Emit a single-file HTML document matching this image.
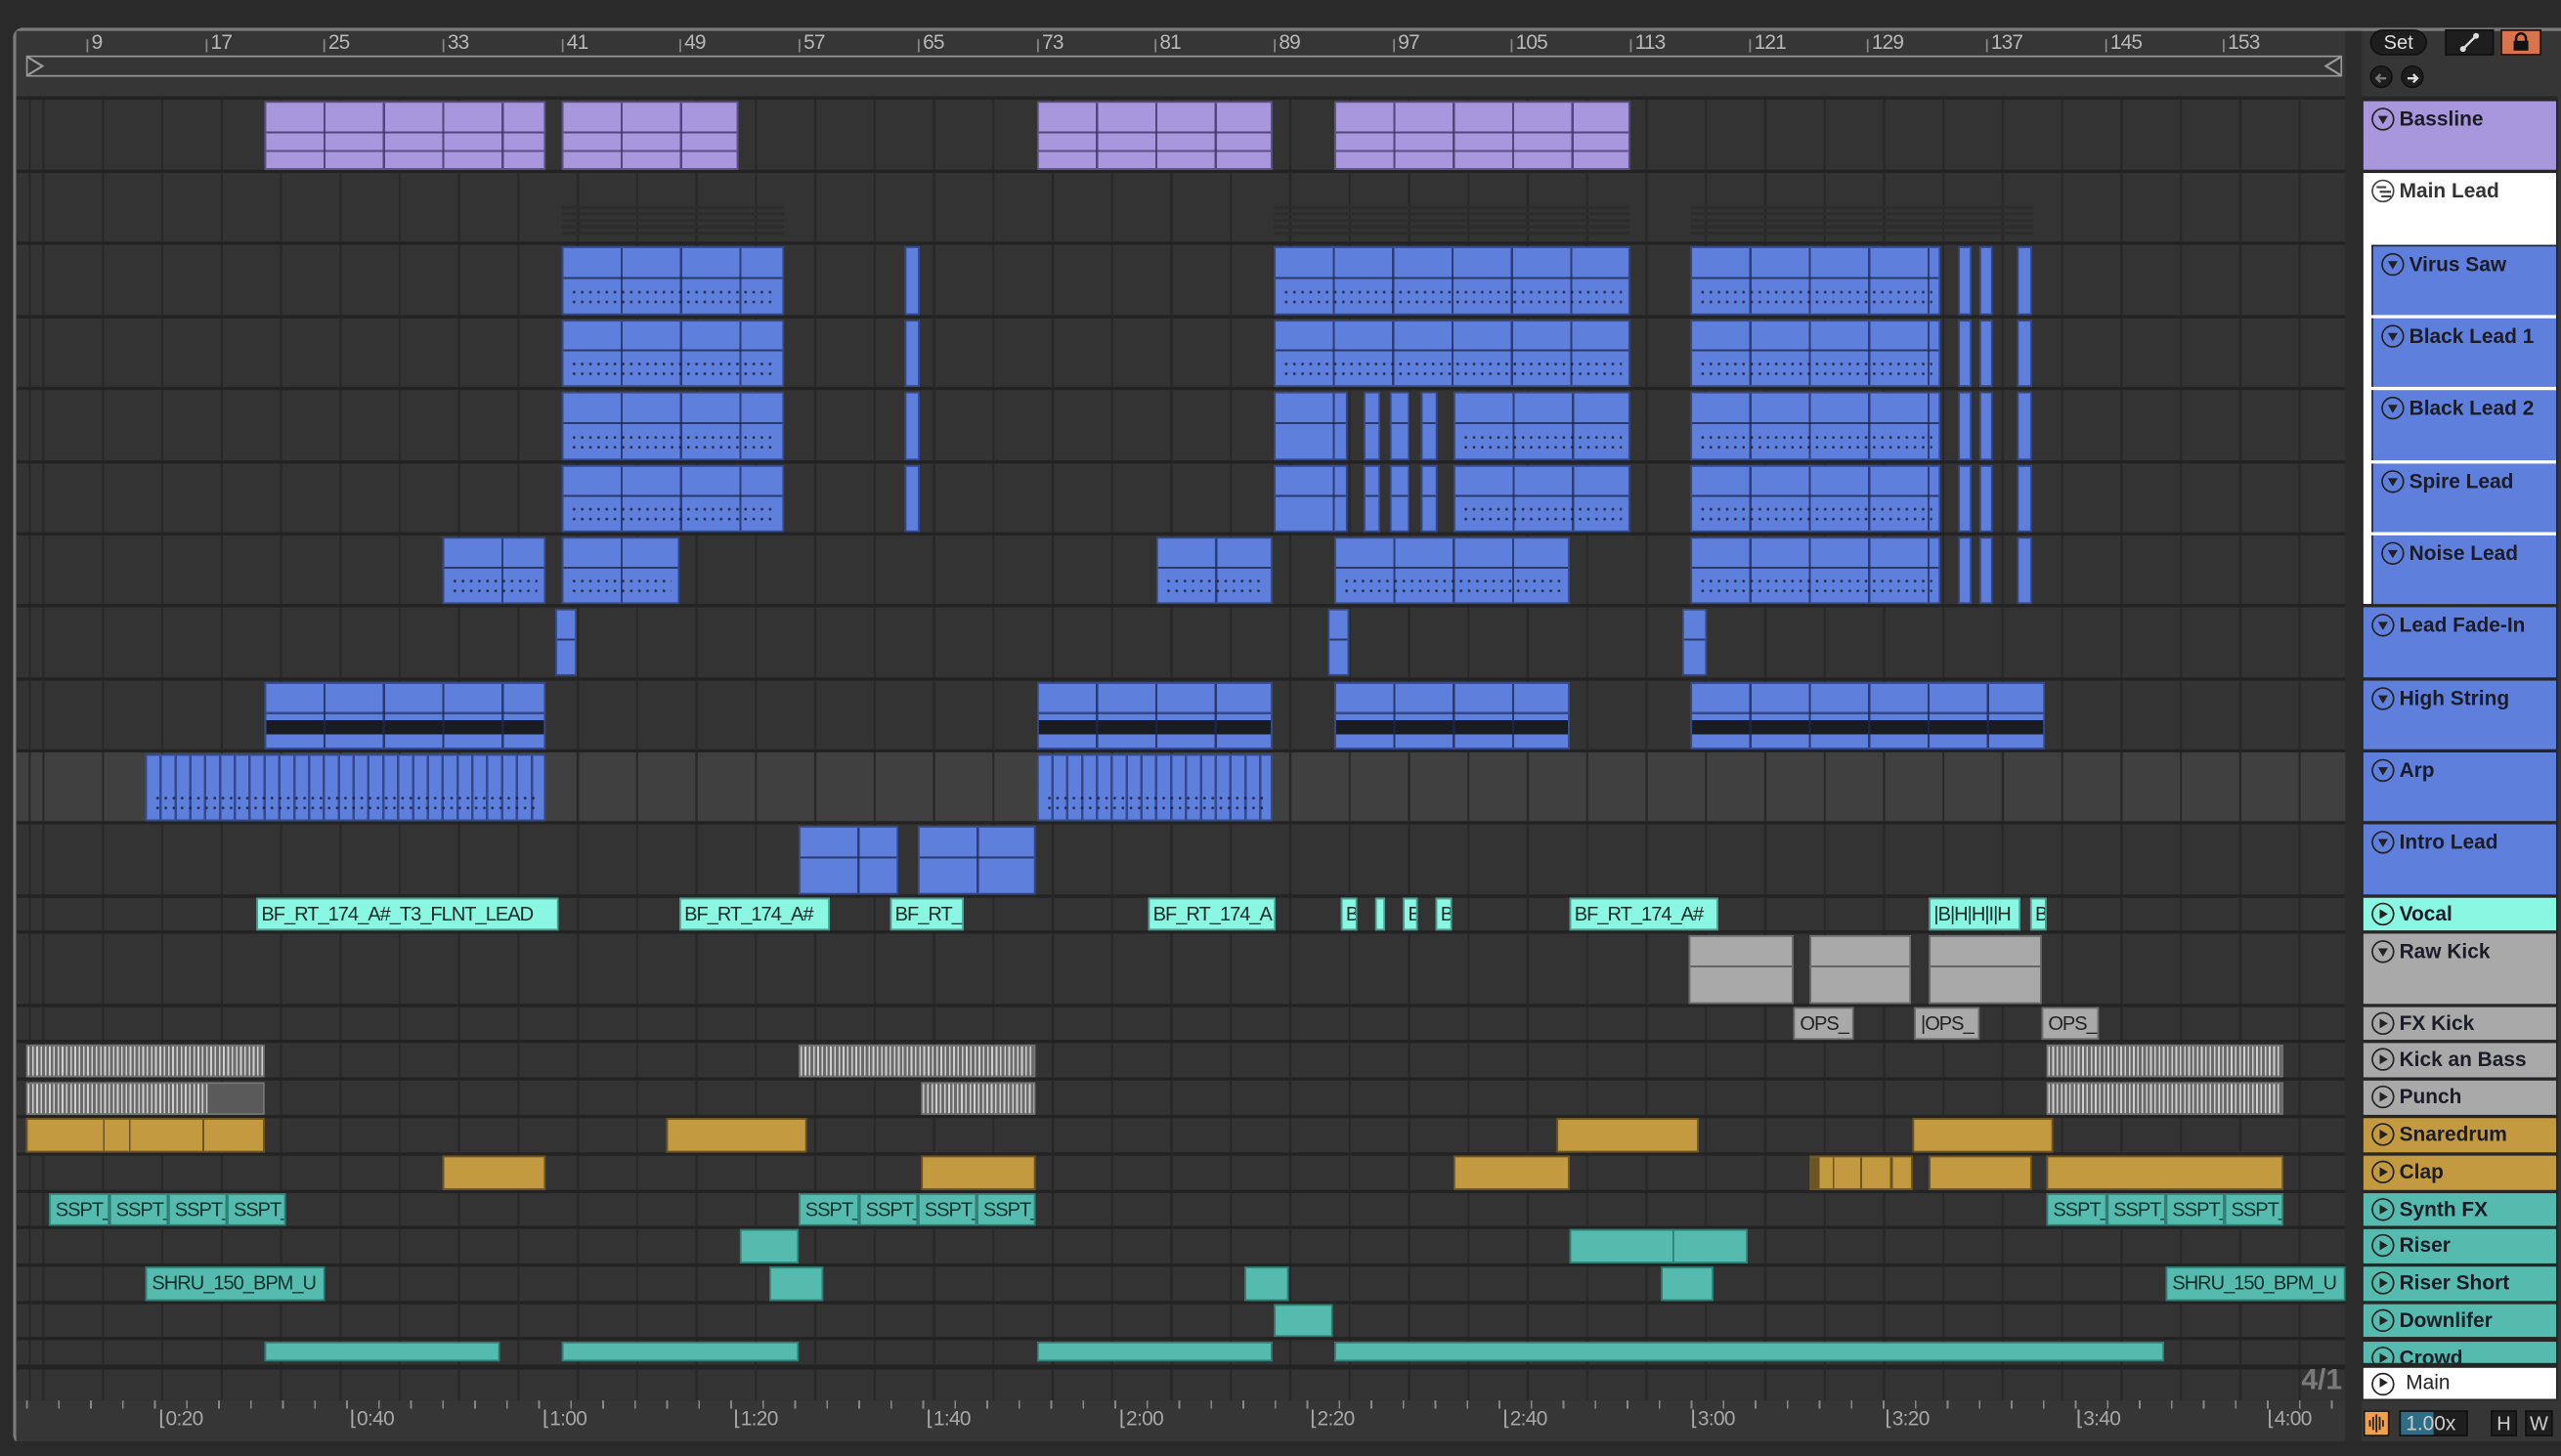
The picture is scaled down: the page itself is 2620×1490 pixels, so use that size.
<!DOCTYPE html>
<html><head><meta charset="utf-8"><style>
*{margin:0;padding:0;box-sizing:border-box}
html,body{width:2620px;height:1490px;overflow:hidden;background:#2a2a2a}
#w{position:absolute;left:0;top:0;width:1568px;height:892px;transform:scale(1.67092,1.67040);transform-origin:0 0;font-family:"Liberation Sans",sans-serif}
.a{position:absolute}
#panel{position:absolute;left:8px;top:17px;width:1570px;height:868px;border:2px solid #7a7a7a;border-radius:6px;background:#363636}
#ruler{position:absolute;left:10px;top:19px;width:1426px;height:40px;background:#363636}
.rn{position:absolute;top:19px;font-size:12.5px;letter-spacing:-0.5px;color:#b8b8b8}
.tk{position:absolute;width:1px;background:#8a8a8a}
#loop{position:absolute;left:16px;top:34px;width:1418px;height:13px;border:1.3px solid #999;background:#353535}
#trk{position:absolute;left:10px;top:59px;width:1426px;height:799px;background:#232323}
.r{position:absolute;left:10px;width:1426px;background-color:#333;background-image:repeating-linear-gradient(90deg,transparent 0 6px,#282828 6px 7.3px,transparent 7.3px 36.35px);background-position:10px 0}
.c{position:absolute;overflow:hidden;white-space:nowrap}
.p{background:#a897dd;border:1px solid #5a4f86}
.b{background:#5e7fdc;border:1px solid #34488c}
.v,.g,.t{font-size:12px;letter-spacing:-0.6px;line-height:18px}
.v{background:#8af7e2;border:1px solid #4a9c8e;color:#1b2b28;padding-left:2px}
.g{background:#a9a9a9;border:1px solid #6c6c6c;color:#222;padding-left:3px}
.y{background:#c49a40;border:1px solid #6e5420}
.t{background:#55bbae;border:1px solid #2f7d73;color:#10302c;padding-left:3px}
.mid{background-image:repeating-linear-gradient(90deg,transparent 0 35px,rgba(30,40,80,.75) 35px 36.35px),linear-gradient(transparent 0 44%,rgba(30,40,80,.8) 44% 47%,transparent 47%)}
.pm{background-image:repeating-linear-gradient(90deg,transparent 0 35px,rgba(60,50,100,.8) 35px 36.35px),linear-gradient(transparent 0 44%,rgba(60,50,100,.8) 44% 47%,transparent 47% 72%,rgba(60,50,100,.7) 72% 75%,transparent 75%)}
.notes::after{content:"";position:absolute;left:4px;right:4px;top:60%;height:30%;background-image:radial-gradient(circle,#1a1a30 0.7px,transparent 1px);background-size:5px 6px;opacity:.8}
.hs{background-image:repeating-linear-gradient(90deg,transparent 0 35px,rgba(30,40,80,.8) 35px 36.35px),linear-gradient(transparent 0 44%,#34488c 44% 48%,transparent 48% 57%,#1b1b22 57% 79%,transparent 79%)}
.arp{background-image:repeating-linear-gradient(90deg,#5e7fdc 0 7.6px,#34488c 7.6px 9.09px),linear-gradient(transparent 0 44%,#34488c 44% 48%,transparent 48%)}
.str{background:repeating-linear-gradient(90deg,#cfcfcf 0 1px,#6a6a6a 1px 2.6px);border:1px solid #777}
.hd{position:absolute;left:1447px;width:118px;font-size:12.5px;font-weight:bold;color:#1c1c28;padding-left:22px;line-height:22px}
.ic{position:absolute;left:5px;top:4px;width:14px;height:14px;border:1.3px solid #222;border-radius:50%}
.dn::after{content:"";position:absolute;left:2.5px;top:4px;border-left:3.3px solid transparent;border-right:3.3px solid transparent;border-top:5px solid #222}
.pl::after{content:"";position:absolute;left:4.2px;top:2.5px;border-top:3.3px solid transparent;border-bottom:3.3px solid transparent;border-left:5px solid #222}
.tm{position:absolute;top:861px;font-size:12.5px;letter-spacing:-0.4px;color:#a8a8a8}
</style></head><body><div id="w">
<div class="a" style="left:0;top:0;width:1568px;height:17px;background:#2a2a2a"></div>
<div id="panel"></div>
<div id="ruler"></div>
<div class="tk" style="left:53px;top:24px;height:8px"></div><div class="rn" style="left:56px">9</div>
<div class="tk" style="left:126px;top:24px;height:8px"></div><div class="rn" style="left:129px">17</div>
<div class="tk" style="left:198px;top:24px;height:8px"></div><div class="rn" style="left:201px">25</div>
<div class="tk" style="left:271px;top:24px;height:8px"></div><div class="rn" style="left:274px">33</div>
<div class="tk" style="left:344px;top:24px;height:8px"></div><div class="rn" style="left:347px">41</div>
<div class="tk" style="left:416px;top:24px;height:8px"></div><div class="rn" style="left:419px">49</div>
<div class="tk" style="left:489px;top:24px;height:8px"></div><div class="rn" style="left:492px">57</div>
<div class="tk" style="left:562px;top:24px;height:8px"></div><div class="rn" style="left:565px">65</div>
<div class="tk" style="left:635px;top:24px;height:8px"></div><div class="rn" style="left:638px">73</div>
<div class="tk" style="left:707px;top:24px;height:8px"></div><div class="rn" style="left:710px">81</div>
<div class="tk" style="left:780px;top:24px;height:8px"></div><div class="rn" style="left:783px">89</div>
<div class="tk" style="left:853px;top:24px;height:8px"></div><div class="rn" style="left:856px">97</div>
<div class="tk" style="left:925px;top:24px;height:8px"></div><div class="rn" style="left:928px">105</div>
<div class="tk" style="left:998px;top:24px;height:8px"></div><div class="rn" style="left:1001px">113</div>
<div class="tk" style="left:1071px;top:24px;height:8px"></div><div class="rn" style="left:1074px">121</div>
<div class="tk" style="left:1143px;top:24px;height:8px"></div><div class="rn" style="left:1146px">129</div>
<div class="tk" style="left:1216px;top:24px;height:8px"></div><div class="rn" style="left:1219px">137</div>
<div class="tk" style="left:1289px;top:24px;height:8px"></div><div class="rn" style="left:1292px">145</div>
<div class="tk" style="left:1361px;top:24px;height:8px"></div><div class="rn" style="left:1364px">153</div>
<div id="loop"></div>
<svg class="a" style="left:16px;top:34px" width="12" height="13"><path d="M1 1 L10 6.5 L1 12" fill="none" stroke="#999" stroke-width="1.3"/></svg>
<svg class="a" style="left:1422px;top:34px" width="12" height="13"><path d="M11 1 L2 6.5 L11 12" fill="none" stroke="#999" stroke-width="1.3"/></svg>
<div class="a" style="left:1436px;top:19px;width:10px;height:866px;background:#2c2c2c"></div>
<div id="trk"></div>

<div class="r" style="top:61px;height:43px"></div>
<div class="r" style="top:106px;height:42px"></div>
<div class="r" style="top:150px;height:43px"></div>
<div class="r" style="top:195px;height:42px"></div>
<div class="r" style="top:239px;height:43px"></div>
<div class="r" style="top:284px;height:42px"></div>
<div class="r" style="top:328px;height:42px"></div>
<div class="r" style="top:372px;height:43px"></div>
<div class="r" style="top:417px;height:42px"></div>
<div class="r" style="top:461px;height:42px;background-color:#404040"></div>
<div class="r" style="top:505px;height:43px"></div>
<div class="r" style="top:550px;height:20px"></div>
<div class="r" style="top:572px;height:43px"></div>
<div class="r" style="top:617px;height:20px"></div>
<div class="r" style="top:639px;height:21px"></div>
<div class="r" style="top:662px;height:21px"></div>
<div class="r" style="top:685px;height:21px"></div>
<div class="r" style="top:708px;height:21px"></div>
<div class="r" style="top:731px;height:20px"></div>
<div class="r" style="top:753px;height:21px"></div>
<div class="r" style="top:776px;height:21px"></div>
<div class="r" style="top:799px;height:20px"></div>
<div class="r" style="top:821px;height:15px"></div>
<div class="r" style="top:839px;height:19px"></div>
<div class="a" style="left:10px;top:858px;width:1426px;height:26px;background:#363636"></div>

<div class="c p pm" style="left:162px;top:62px;width:172px;height:42px"></div>
<div class="c p pm" style="left:344px;top:62px;width:108px;height:42px"></div>
<div class="c p pm" style="left:635px;top:62px;width:144px;height:42px"></div>
<div class="c p pm" style="left:817px;top:62px;width:181px;height:42px"></div>
<div class="a" style="left:344px;top:126px;width:136px;height:18px;background:repeating-linear-gradient(#2d2d2d 0 2px,transparent 2px 4px)"></div>
<div class="a" style="left:780px;top:126px;width:218px;height:18px;background:repeating-linear-gradient(#2d2d2d 0 2px,transparent 2px 4px)"></div>
<div class="a" style="left:1035px;top:126px;width:210px;height:18px;background:repeating-linear-gradient(#2d2d2d 0 2px,transparent 2px 4px)"></div>
<div class="c b mid notes" style="left:344px;top:151px;width:136px;height:42px"></div>
<div class="c b" style="left:554px;top:151px;width:9px;height:42px"></div>
<div class="c b mid notes" style="left:780px;top:151px;width:218px;height:42px"></div>
<div class="c b mid notes" style="left:1035px;top:151px;width:153px;height:42px"></div>
<div class="c b" style="left:1199px;top:151px;width:8px;height:42px"></div>
<div class="c b" style="left:1212px;top:151px;width:8px;height:42px"></div>
<div class="c b" style="left:1235px;top:151px;width:9px;height:42px"></div>
<div class="c b mid notes" style="left:344px;top:196px;width:136px;height:41px"></div>
<div class="c b" style="left:554px;top:196px;width:9px;height:41px"></div>
<div class="c b mid notes" style="left:780px;top:196px;width:218px;height:41px"></div>
<div class="c b mid notes" style="left:1035px;top:196px;width:153px;height:41px"></div>
<div class="c b" style="left:1199px;top:196px;width:8px;height:41px"></div>
<div class="c b" style="left:1212px;top:196px;width:8px;height:41px"></div>
<div class="c b" style="left:1235px;top:196px;width:9px;height:41px"></div>
<div class="c b mid notes" style="left:344px;top:240px;width:136px;height:42px"></div>
<div class="c b" style="left:554px;top:240px;width:9px;height:42px"></div>
<div class="c b mid" style="left:780px;top:240px;width:45px;height:42px"></div>
<div class="c b mid" style="left:835px;top:240px;width:10px;height:42px"></div>
<div class="c b mid" style="left:851px;top:240px;width:12px;height:42px"></div>
<div class="c b mid" style="left:870px;top:240px;width:10px;height:42px"></div>
<div class="c b mid notes" style="left:890px;top:240px;width:108px;height:42px"></div>
<div class="c b mid notes" style="left:1035px;top:240px;width:153px;height:42px"></div>
<div class="c b" style="left:1199px;top:240px;width:8px;height:42px"></div>
<div class="c b" style="left:1212px;top:240px;width:8px;height:42px"></div>
<div class="c b" style="left:1235px;top:240px;width:9px;height:42px"></div>
<div class="c b mid notes" style="left:344px;top:285px;width:136px;height:41px"></div>
<div class="c b" style="left:554px;top:285px;width:9px;height:41px"></div>
<div class="c b mid" style="left:780px;top:285px;width:45px;height:41px"></div>
<div class="c b mid" style="left:835px;top:285px;width:10px;height:41px"></div>
<div class="c b mid" style="left:851px;top:285px;width:12px;height:41px"></div>
<div class="c b mid" style="left:870px;top:285px;width:10px;height:41px"></div>
<div class="c b mid notes" style="left:890px;top:285px;width:108px;height:41px"></div>
<div class="c b mid notes" style="left:1035px;top:285px;width:153px;height:41px"></div>
<div class="c b" style="left:1199px;top:285px;width:8px;height:41px"></div>
<div class="c b" style="left:1212px;top:285px;width:8px;height:41px"></div>
<div class="c b" style="left:1235px;top:285px;width:9px;height:41px"></div>
<div class="c b mid notes" style="left:271px;top:329px;width:63px;height:41px"></div>
<div class="c b mid notes" style="left:344px;top:329px;width:72px;height:41px"></div>
<div class="c b mid notes" style="left:708px;top:329px;width:71px;height:41px"></div>
<div class="c b mid notes" style="left:817px;top:329px;width:144px;height:41px"></div>
<div class="c b mid notes" style="left:1035px;top:329px;width:153px;height:41px"></div>
<div class="c b" style="left:1199px;top:329px;width:8px;height:41px"></div>
<div class="c b" style="left:1212px;top:329px;width:8px;height:41px"></div>
<div class="c b" style="left:1235px;top:329px;width:9px;height:41px"></div>
<div class="c b mid" style="left:340px;top:373px;width:13px;height:41px"></div>
<div class="c b mid" style="left:813px;top:373px;width:13px;height:41px"></div>
<div class="c b mid" style="left:1030px;top:373px;width:15px;height:41px"></div>
<div class="c b hs" style="left:162px;top:418px;width:172px;height:41px"></div>
<div class="c b hs" style="left:635px;top:418px;width:144px;height:41px"></div>
<div class="c b hs" style="left:817px;top:418px;width:144px;height:41px"></div>
<div class="c b hs" style="left:1035px;top:418px;width:217px;height:41px"></div>
<div class="c b arp notes" style="left:89px;top:462px;width:245px;height:41px"></div>
<div class="c b arp notes" style="left:635px;top:462px;width:144px;height:41px"></div>
<div class="c b mid" style="left:489px;top:506px;width:61px;height:42px"></div>
<div class="c b mid" style="left:562px;top:506px;width:72px;height:42px"></div>
<div class="c v" style="left:157px;top:550px;width:185px;height:20px">BF_RT_174_A#_T3_FLNT_LEAD</div>
<div class="c v" style="left:416px;top:550px;width:92px;height:20px">BF_RT_174_A#</div>
<div class="c v" style="left:545px;top:550px;width:45px;height:20px">BF_RT_</div>
<div class="c v" style="left:703px;top:550px;width:78px;height:20px">BF_RT_174_A</div>
<div class="c v" style="left:821px;top:550px;width:10px;height:20px">B</div>
<div class="c v" style="left:842px;top:550px;width:6px;height:20px"></div>
<div class="c v" style="left:859px;top:550px;width:9px;height:20px">B</div>
<div class="c v" style="left:879px;top:550px;width:10px;height:20px">B</div>
<div class="c v" style="left:961px;top:550px;width:91px;height:20px">BF_RT_174_A#</div>
<div class="c v" style="left:1181px;top:550px;width:56px;height:20px">|B|H|H|I|H</div>
<div class="c v" style="left:1243px;top:550px;width:10px;height:20px">B</div>
<div class="c g" style="left:1034px;top:573px;width:64px;height:42px;background-image:linear-gradient(transparent 0 44%,#666 44% 47%,transparent 47%)"></div>
<div class="c g" style="left:1108px;top:573px;width:62px;height:42px;background-image:linear-gradient(transparent 0 44%,#666 44% 47%,transparent 47%)"></div>
<div class="c g" style="left:1181px;top:573px;width:69px;height:42px;background-image:linear-gradient(transparent 0 44%,#666 44% 47%,transparent 47%)"></div>
<div class="c g" style="left:1098px;top:617px;width:37px;height:20px">OPS_</div>
<div class="c g" style="left:1172px;top:617px;width:40px;height:20px">|OPS_</div>
<div class="c g" style="left:1250px;top:617px;width:35px;height:20px">OPS_</div>
<div class="c str" style="left:16px;top:640px;width:146px;height:20px"></div>
<div class="c str" style="left:489px;top:640px;width:145px;height:20px"></div>
<div class="c str" style="left:1253px;top:640px;width:145px;height:20px"></div>
<div class="c str" style="left:16px;top:663px;width:146px;height:20px;background:repeating-linear-gradient(90deg,#cfcfcf 0 1px,#6a6a6a 1px 2.6px) 0 0/110px 100% no-repeat,#5a5a5a"></div>
<div class="c str" style="left:564px;top:663px;width:70px;height:20px"></div>
<div class="c str" style="left:1253px;top:663px;width:145px;height:20px"></div>
<div class="c y" style="left:16px;top:685px;width:146px;height:21px;background-image:linear-gradient(90deg,transparent 0 46px,#6e5420 46px 47px,transparent 47px 62px,#6e5420 62px 63px,transparent 63px 107px,#6e5420 107px 108px,transparent 108px)"></div>
<div class="c y" style="left:408px;top:685px;width:86px;height:21px"></div>
<div class="c y" style="left:953px;top:685px;width:87px;height:21px"></div>
<div class="c y" style="left:1171px;top:685px;width:86px;height:21px"></div>
<div class="c y" style="left:271px;top:708px;width:63px;height:21px"></div>
<div class="c y" style="left:564px;top:708px;width:70px;height:21px"></div>
<div class="c y" style="left:890px;top:708px;width:71px;height:21px"></div>
<div class="c y" style="left:1108px;top:708px;width:63px;height:21px;background-image:linear-gradient(90deg,#6e5420 0 5px,transparent 5px 13px,#6e5420 13px 14px,transparent 14px 30px,#6e5420 30px 31px,transparent 31px 48px,#6e5420 48px 50px,transparent 50px)"></div>
<div class="c y" style="left:1181px;top:708px;width:63px;height:21px"></div>
<div class="c y" style="left:1253px;top:708px;width:145px;height:21px"></div>
<div class="c t" style="left:30px;top:731px;width:37px;height:20px">SSPT_</div>
<div class="c t" style="left:67px;top:731px;width:36px;height:20px">SSPT_</div>
<div class="c t" style="left:103px;top:731px;width:36px;height:20px">SSPT_</div>
<div class="c t" style="left:139px;top:731px;width:36px;height:20px">SSPT_</div>
<div class="c t" style="left:489px;top:731px;width:37px;height:20px">SSPT_</div>
<div class="c t" style="left:526px;top:731px;width:36px;height:20px">SSPT_</div>
<div class="c t" style="left:562px;top:731px;width:36px;height:20px">SSPT_</div>
<div class="c t" style="left:598px;top:731px;width:36px;height:20px">SSPT_</div>
<div class="c t" style="left:1253px;top:731px;width:37px;height:20px">SSPT_</div>
<div class="c t" style="left:1290px;top:731px;width:36px;height:20px">SSPT_</div>
<div class="c t" style="left:1326px;top:731px;width:36px;height:20px">SSPT_</div>
<div class="c t" style="left:1362px;top:731px;width:36px;height:20px">SSPT_</div>
<div class="c t" style="left:453px;top:753px;width:36px;height:21px"></div>
<div class="c t" style="left:961px;top:753px;width:64px;height:21px"></div>
<div class="c t" style="left:1024px;top:753px;width:46px;height:21px"></div>
<div class="c t" style="left:89px;top:776px;width:110px;height:21px">SHRU_150_BPM_U</div>
<div class="c t" style="left:471px;top:776px;width:33px;height:21px"></div>
<div class="c t" style="left:762px;top:776px;width:27px;height:21px"></div>
<div class="c t" style="left:1017px;top:776px;width:32px;height:21px"></div>
<div class="c t" style="left:1326px;top:776px;width:110px;height:21px">SHRU_150_BPM_U</div>
<div class="c t" style="left:780px;top:799px;width:36px;height:20px"></div>
<div class="c t" style="left:162px;top:822px;width:144px;height:12px"></div>
<div class="c t" style="left:344px;top:822px;width:145px;height:12px"></div>
<div class="c t" style="left:635px;top:822px;width:144px;height:12px"></div>
<div class="c t" style="left:817px;top:822px;width:508px;height:12px"></div>

<div class="a" style="left:16px;top:858px;width:1420px;height:5px;background:repeating-linear-gradient(90deg,#888 0 1px,transparent 1px 19.6px)"></div>
<div class="tm" style="left:97px">⌊0:20</div>
<div class="tm" style="left:214px">⌊0:40</div>
<div class="tm" style="left:332px">⌊1:00</div>
<div class="tm" style="left:449px">⌊1:20</div>
<div class="tm" style="left:567px">⌊1:40</div>
<div class="tm" style="left:685px">⌊2:00</div>
<div class="tm" style="left:802px">⌊2:20</div>
<div class="tm" style="left:920px">⌊2:40</div>
<div class="tm" style="left:1035px">⌊3:00</div>
<div class="tm" style="left:1154px">⌊3:20</div>
<div class="tm" style="left:1271px">⌊3:40</div>
<div class="tm" style="left:1388px">⌊4:00</div>
<div class="a" style="left:1409px;top:835px;font-size:18px;font-weight:bold;color:#7a7a7a">4/1</div>

<div class="a" style="left:1446px;top:59px;width:120px;height:799px;background:#262626"></div>
<div class="hd" style="top:62px;height:42px;background:#a897dd"><span class="ic dn"></span>Bassline</div>
<div class="hd" style="top:106px;height:264px;background:#fff;color:#333"><span class="ic" style="border-color:#444"></span><svg class="a" style="left:8px;top:8px" width="9" height="7"><path d="M0 .7H6M2 3.5H9M3 6.3H9" stroke="#444" stroke-width="1.3"/></svg>Main Lead</div>
<div class="hd" style="left:1452px;width:113px;top:150px;height:43px;background:#5e7fdc;border-left:1.5px solid #222;border-top:1.5px solid #222"><span class="ic dn"></span>Virus Saw</div>
<div class="hd" style="left:1452px;width:113px;top:195px;height:42px;background:#5e7fdc;border-left:1.5px solid #222"><span class="ic dn"></span>Black Lead 1</div>
<div class="hd" style="left:1452px;width:113px;top:239px;height:43px;background:#5e7fdc;border-left:1.5px solid #222"><span class="ic dn"></span>Black Lead 2</div>
<div class="hd" style="left:1452px;width:113px;top:284px;height:42px;background:#5e7fdc;border-left:1.5px solid #222"><span class="ic dn"></span>Spire Lead</div>
<div class="hd" style="left:1452px;width:113px;top:328px;height:42px;background:#5e7fdc;border-left:1.5px solid #222"><span class="ic dn"></span>Noise Lead</div>
<div class="hd" style="top:372px;height:43px;background:#5e7fdc"><span class="ic dn"></span>Lead Fade-In</div>
<div class="hd" style="top:417px;height:42px;background:#5e7fdc"><span class="ic dn"></span>High String</div>
<div class="hd" style="top:461px;height:42px;background:#5e7fdc"><span class="ic dn"></span>Arp</div>
<div class="hd" style="top:505px;height:43px;background:#5e7fdc"><span class="ic dn"></span>Intro Lead</div>
<div class="hd" style="top:550px;height:20px;line-height:20px;background:#8af7e2"><span class="ic pl" style="top:3px"></span>Vocal</div>
<div class="hd" style="top:572px;height:43px;background:#a9a9a9"><span class="ic dn"></span>Raw Kick</div>
<div class="hd" style="top:617px;height:20px;line-height:20px;background:#a9a9a9"><span class="ic pl" style="top:3px"></span>FX Kick</div>
<div class="hd" style="top:639px;height:21px;line-height:21px;background:#a9a9a9"><span class="ic pl" style="top:3px"></span>Kick an Bass</div>
<div class="hd" style="top:662px;height:21px;line-height:21px;background:#a9a9a9"><span class="ic pl" style="top:3px"></span>Punch</div>
<div class="hd" style="top:685px;height:21px;line-height:21px;background:#c49a40"><span class="ic pl" style="top:3px"></span>Snaredrum</div>
<div class="hd" style="top:708px;height:21px;line-height:21px;background:#c49a40"><span class="ic pl" style="top:3px"></span>Clap</div>
<div class="hd" style="top:731px;height:20px;line-height:20px;background:#55bbae"><span class="ic pl" style="top:3px"></span>Synth FX</div>
<div class="hd" style="top:753px;height:21px;line-height:21px;background:#55bbae"><span class="ic pl" style="top:3px"></span>Riser</div>
<div class="hd" style="top:776px;height:21px;line-height:21px;background:#55bbae"><span class="ic pl" style="top:3px"></span>Riser Short</div>
<div class="hd" style="top:799px;height:20px;line-height:20px;background:#55bbae"><span class="ic pl" style="top:3px"></span>Downlifer</div>
<div class="hd" style="top:822px;height:13px;line-height:20px;overflow:hidden;background:#55bbae"><span class="ic pl" style="top:3px"></span>Crowd</div>
<div class="hd" style="top:838px;height:19px;line-height:19px;background:#fff;color:#222;font-weight:normal;padding-left:26px"><span class="ic pl" style="top:2.5px"></span>Main</div>

<div class="a" style="left:1451px;top:18px;width:35px;height:16px;border-radius:8px;background:#1e1e1e;border:1px solid #111;color:#ddd;font-size:12px;text-align:center;line-height:14px">Set</div>
<div class="a" style="left:1497px;top:18px;width:30px;height:16px;background:#1e1e1e;border:1px solid #111"><svg width="28" height="14"><path d="M10 11 L18 3" stroke="#ddd" stroke-width="1.4"/><circle cx="10" cy="11" r="1.8" fill="#ddd"/><circle cx="18" cy="3" r="1.8" fill="#ddd"/></svg></div>
<div class="a" style="left:1531px;top:18px;width:25px;height:16px;background:#d9734e;border:1px solid #111"><svg width="23" height="14"><rect x="7" y="6" width="9" height="6" fill="#111"/><path d="M8.5 6.5 V4.5 a3 3 0 0 1 6 0 V6.5" fill="none" stroke="#111" stroke-width="1.5"/></svg></div>
<div class="a" style="left:1451px;top:40px;width:14px;height:14px;border-radius:50%;background:#1e1e1e;border:1px solid #111"><svg width="12" height="12"><path d="M9 6H3M5.5 3.5L3 6L5.5 8.5" stroke="#777" stroke-width="1.4" fill="none"/></svg></div>
<div class="a" style="left:1470px;top:40px;width:14px;height:14px;border-radius:50%;background:#1e1e1e;border:1px solid #111"><svg width="12" height="12"><path d="M3 6H9M6.5 3.5L9 6L6.5 8.5" stroke="#ddd" stroke-width="1.4" fill="none"/></svg></div>

<div class="a" style="left:1447px;top:864px;width:16px;height:16px;background:#f0a04a;border:1px solid #111"><svg width="14" height="14"><path d="M3 5v4M5 3v8M7 1.5v11M9 3v8M11 5v4" stroke="#222" stroke-width="1.1"/></svg></div>
<div class="a" style="left:1469px;top:864px;width:42px;height:16px;background:#1e1e1e;border:1px solid #111;color:#ccc;font-size:12.5px;line-height:14px;padding-left:3px"><span class="a" style="left:0;top:0;width:20px;height:14px;background:#2d6d85"></span><span style="position:relative">1.00x</span></div>
<div class="a" style="left:1525px;top:864px;width:16px;height:16px;background:#1e1e1e;border:1px solid #111;color:#ccc;font-size:12px;line-height:14px;text-align:center">H</div>
<div class="a" style="left:1546px;top:864px;width:17px;height:16px;background:#1e1e1e;border:1px solid #111;color:#ccc;font-size:12px;line-height:14px;text-align:center">W</div>
<div class="a" style="left:8px;top:883px;width:1560px;height:9px;background:#2a2a2a"></div>
</div></body></html>
